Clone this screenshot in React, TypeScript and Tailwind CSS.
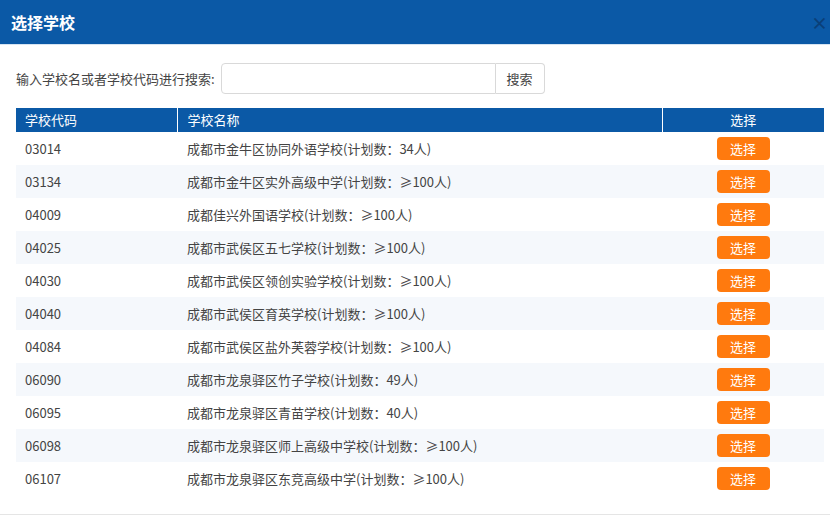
const schools = [
  ["03014", "成都市金牛区协同外语学校(计划数：34人)"],
  ["03134", "成都市金牛区实外高级中学(计划数：≥100人)"],
  ["04009", "成都佳兴外国语学校(计划数：≥100人)"],
  ["04025", "成都市武侯区五七学校(计划数：≥100人)"],
  ["04030", "成都市武侯区领创实验学校(计划数：≥100人)"],
  ["04040", "成都市武侯区育英学校(计划数：≥100人)"],
  ["04084", "成都市武侯区盐外芙蓉学校(计划数：≥100人)"],
  ["06090", "成都市龙泉驿区竹子学校(计划数：49人)"],
  ["06095", "成都市龙泉驿区青苗学校(计划数：40人)"],
  ["06098", "成都市龙泉驿区师上高级中学校(计划数：≥100人)"],
  ["06107", "成都市龙泉驿区东竞高级中学(计划数：≥100人)"],
]

export default function App() {
  return (
    <div
      className="w-[830px] h-[526px] bg-white overflow-hidden text-[#333]"
      style={{ fontFamily: '"Noto Sans CJK SC", "Noto Sans", sans-serif' }}
    >
      {/* Header */}
      <div className="h-[45px] bg-[#0b59a6] flex items-center justify-between pl-[11px] pr-[3px] border-b border-[#d6e4f2]">
        <h1 className="text-white text-[16px] font-bold leading-none">选择学校</h1>
        <span className="text-[#0a3f78] text-[17px] font-bold leading-none w-[16px] text-center">×</span>
      </div>

      <div className="pl-[16px] pr-[6px]">
        {/* Search */}
        <div className="flex items-center h-[31px] mt-[18px]">
          <label className="text-[13px] text-[#444] mr-[6px]">输入学校名或者学校代码进行搜索:</label>
          <input className="w-[275px] h-[31px] border border-[#d9d9d9] rounded-l-[4px] outline-none px-2 text-[13px]" />
          <button className="h-[31px] w-[49px] border border-l-0 border-[#d9d9d9] rounded-r-[4px] bg-white text-[13px] text-[#444]">
            搜索
          </button>
        </div>

        {/* Table */}
        <table className="mt-[14px] w-[808px] border-collapse text-[13px]">
          <thead>
            <tr className="bg-[#0b59a6] text-white h-[24px]">
              <th className="w-[161px] text-left font-normal pl-[9px] border-r border-white">学校代码</th>
              <th className="w-[485px] text-left font-normal pl-[10px] border-r border-white">学校名称</th>
              <th className="font-normal text-center">选择</th>
            </tr>
          </thead>
          <tbody>
            {schools.map(([code, name], i) => (
              <tr key={code} className={`h-[33px] ${i % 2 === 1 ? "bg-[#f5f8fc]" : "bg-white"}`}>
                <td className="pl-[9px] text-[#444]">{code}</td>
                <td className="pl-[10px] text-[#444]">{name}</td>
                <td className="text-center">
                  <button className="w-[53px] h-[23px] rounded-[4px] bg-[#ff7a0e] text-white text-[13px] leading-none">
                    选择
                  </button>
                </td>
              </tr>
            ))}
          </tbody>
        </table>
      </div>

      <div className="mt-[19px] border-t border-[#e5e5e5]" />
    </div>
  )
}
